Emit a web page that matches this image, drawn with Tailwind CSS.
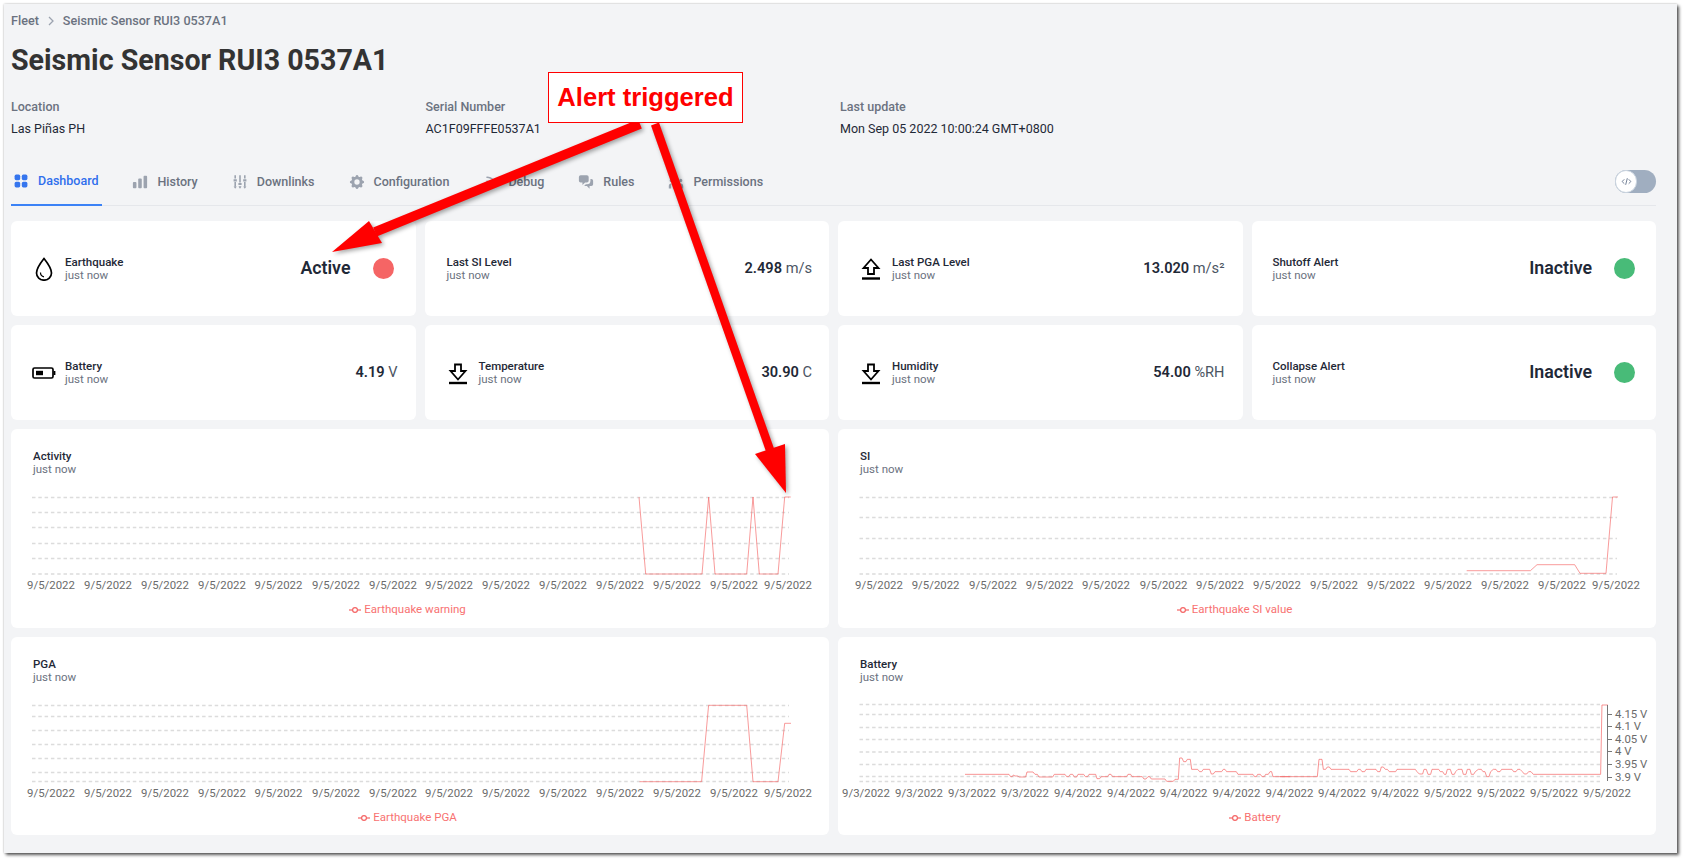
<!DOCTYPE html>
<html lang="en">
<head>
    <meta charset="UTF-8">
    <meta name="viewport" content="width=device-width, initial-scale=1.0">
    <title>Seismic Sensor RUI3 0537A1</title>
    <script src="https://cdn.jsdelivr.net/npm/@tailwindcss/browser@4"></script>
</head>
<body class="relative w-[1687px] h-[862px] overflow-hidden bg-white font-['Roboto',sans-serif]">
    <div class="ml-[4px] mt-[4px] w-[1673px] h-[849px] pl-[7px] bg-[#f3f4f6] shadow-[2px_2px_3px_rgba(0,0,0,0.65),0_0_2px_rgba(0,0,0,0.25)]">
        <div class="w-[1645px]">
            <!-- breadcrumb -->
            <div class="pt-[9px] h-[25px] flex items-center text-[12.6px] font-medium text-[#6b7280]">
                <span>Fleet</span>
                <svg class="w-[16px] h-[16px] mx-[4px] text-[#9ca3af]" viewBox="0 0 20 20" fill="none" stroke="currentColor" stroke-width="1.6"><path d="M7.5 5l5 5-5 5"/></svg>
                <span>Seismic Sensor RUI3 0537A1</span>
            </div>
            <h1 class="mt-[13px] h-[36px] leading-[36px] text-[28.6px] font-bold text-[#333]">Seismic Sensor RUI3 0537A1</h1>

            <!-- device info -->
            <div class="mt-[20px] grid grid-cols-[414.5px_414.5px_1fr] text-[12.5px]">
                <div>
                    <div class="h-[18px] leading-[18px] font-medium text-[#6b7280]">Location</div>
                    <div class="mt-[4px] h-[18px] leading-[18px] text-[#1f2937]">Las Piñas PH</div>
                </div>
                <div>
                    <div class="h-[18px] leading-[18px] font-medium text-[#6b7280]">Serial Number</div>
                    <div class="mt-[4px] h-[18px] leading-[18px] text-[#1f2937]">AC1F09FFFE0537A1</div>
                </div>
                <div>
                    <div class="h-[18px] leading-[18px] font-medium text-[#6b7280]">Last update</div>
                    <div class="mt-[4px] h-[18px] leading-[18px] text-[#1f2937]">Mon Sep 05 2022 10:00:24 GMT+0800</div>
                </div>
            </div>

            <!-- tabs -->
            <div class="mt-[26px] h-[42px] flex justify-between border-b border-[#e5e7eb]">
                <div class="flex gap-[30px] text-[12.5px] font-medium text-[#6b7280]">
                    <div class="h-[42px] pl-[2px] pr-[4px] mr-[-2px] pb-[6px] flex items-center gap-[9px] border-b-2 border-[#3b82f6] text-[#2f6fed]">
                        <svg class="w-[16px] h-[16px]" viewBox="0 0 20 20" fill="#3575ee"><rect x="2" y="2" width="7" height="7" rx="2"/><rect x="11" y="2" width="7" height="7" rx="2"/><rect x="2" y="11" width="7" height="7" rx="2"/><rect x="11" y="11" width="7" height="7" rx="2"/></svg>
                        Dashboard
                    </div>
                    <div class="h-[42px] px-[2px] pb-[6px] flex items-center gap-[9px]">
                        <svg class="w-[16px] h-[16px]" viewBox="1 2 18 16" fill="#9ca3af"><path d="M2 11a1 1 0 011-1h2a1 1 0 011 1v5a1 1 0 01-1 1H3a1 1 0 01-1-1v-5zM8 7a1 1 0 011-1h2a1 1 0 011 1v9a1 1 0 01-1 1H9a1 1 0 01-1-1V7zM14 4a1 1 0 011-1h2a1 1 0 011 1v12a1 1 0 01-1 1h-2a1 1 0 01-1-1V4z"/></svg>
                        History
                    </div>
                    <div class="h-[42px] px-[2px] pb-[6px] flex items-center gap-[9px]">
                        <svg class="w-[16px] h-[16px]" viewBox="0 0 20 20" fill="none" stroke="#9ca3af" stroke-width="2"><path d="M4 1.500v4M4 10v6M10 1.500v9M10 15v1M16 1.500v4M16 10v6"/><path d="M2 8h4M8 12.500h4M14 8h4" stroke-width="2.600"/><path d="M2 15.500l2 3 2-3zM8 15.500l2 3 2-3zM14 15.500l2 3 2-3z" fill="#9ca3af" stroke="none"/></svg>
                        Downlinks
                    </div>
                    <div class="h-[42px] px-[2px] pb-[6px] flex items-center gap-[9px]">
                        <svg class="w-[16px] h-[16px]" viewBox="1 1 18 18" fill="#9ca3af"><path fill-rule="evenodd" clip-rule="evenodd" d="M11.49 3.17c-.38-1.56-2.6-1.56-2.98 0a1.532 1.532 0 01-2.286.948c-1.372-.836-2.942.734-2.106 2.106.54.886.061 2.042-.947 2.287-1.561.379-1.561 2.6 0 2.978a1.532 1.532 0 01.947 2.287c-.836 1.372.734 2.942 2.106 2.106a1.532 1.532 0 012.287.947c.379 1.561 2.6 1.561 2.978 0a1.533 1.533 0 012.287-.947c1.372.836 2.942-.734 2.106-2.106a1.533 1.533 0 01.947-2.287c1.561-.379 1.561-2.6 0-2.978a1.532 1.532 0 01-.947-2.287c.836-1.372-.734-2.942-2.106-2.106a1.532 1.532 0 01-2.287-.947zM10 13a3 3 0 100-6 3 3 0 000 6z"/></svg>
                        Configuration
                    </div>
                    <div class="h-[42px] px-[2px] pb-[6px] flex items-center gap-[9px]">
                        <svg class="w-[16px] h-[16px]" viewBox="0 0 20 20" fill="#9ca3af"><path d="M5 3a1 1 0 000 2c5.523 0 10 4.477 10 10a1 1 0 102 0C17 8.373 11.627 3 5 3z"/><path d="M4 9a1 1 0 011-1 7 7 0 017 7 1 1 0 11-2 0 5 5 0 00-5-5 1 1 0 01-1-1zM3 15a2 2 0 114 0 2 2 0 01-4 0z"/></svg>
                        Debug
                    </div>
                    <div class="h-[42px] px-[2px] pb-[6px] flex items-center gap-[9px]">
                        <svg class="w-[16px] h-[16px]" viewBox="1 2 18 17" fill="#9ca3af"><path d="M2 5a2 2 0 012-2h7a2 2 0 012 2v4a2 2 0 01-2 2H9l-3 3v-3H4a2 2 0 01-2-2V5z"/><path d="M15 7v2a4 4 0 01-4 4H9.828l-1.766 1.767c.28.149.599.233.938.233h2l3 3v-3h2a2 2 0 002-2V9a2 2 0 00-2-2h-1z"/></svg>
                        Rules
                    </div>
                    <div class="h-[42px] px-[2px] pb-[6px] flex items-center gap-[9px]">
                        <svg class="w-[16px] h-[16px]" viewBox="0 0 20 20" fill="#9ca3af"><path d="M13 6a3 3 0 11-6 0 3 3 0 016 0zM18 8a2 2 0 11-4 0 2 2 0 014 0zM14 15a4 4 0 00-8 0v3h8v-3zM6 8a2 2 0 11-4 0 2 2 0 014 0zM16 18v-3a5.972 5.972 0 00-.75-2.906A3.005 3.005 0 0119 15v3h-3zM4.750 12.094A5.973 5.973 0 004 15v3H1v-3a3 3 0 013.750-2.906z"/></svg>
                        Permissions
                    </div>
                </div>
                <div class="mt-[6px] h-[23px] w-[41px] rounded-full bg-[#a0aec0]">
                    <div class="w-[22px] h-[23px] rounded-full bg-white border border-[#cbd5e0] flex items-center justify-center">
                        <svg class="w-[11px] h-[11px]" viewBox="0 0 20 20" fill="none" stroke="#718096" stroke-width="1.800"><path d="M6 6l-4 4 4 4M14 6l4 4-4 4M11.500 4l-3 12"/></svg>
                    </div>
                </div>
            </div>

            <!-- stat cards -->
            <div class="mt-[15px] grid grid-cols-4 gap-[9px] auto-rows-[95px]">
                <div class="bg-white rounded-md pl-[21px] pr-[22px] flex items-center justify-between">
                    <div class="flex items-center">
                        <svg class="w-[24px] h-[24px] mr-[9px]" viewBox="0 0 24 24" fill="none" stroke="#000" stroke-width="1.700"><path d="M12 1.500C12 1.500 4.500 11 4.500 16a7.500 7.200 0 0015 0C19.500 11 12 1.500 12 1.500z"/><path d="M8.500 15.500c0 2.500 1.500 4 3.500 4.300" stroke-width="1.200"/></svg>
                        <div>
                            <div class="h-[14px] leading-[14px] text-[11.5px] font-medium text-[#1f2937]">Earthquake</div>
                            <div class="h-[13px] leading-[13px] text-[11.5px] text-[#6b7280]">just now</div>
                        </div>
                    </div>
                    <div class="flex items-center gap-[22px]">
                        <span class="text-[17.8px] font-semibold text-[#1f2937]">Active</span>
                        <span class="w-[21px] h-[21px] rounded-full bg-[#f56565]"></span>
                    </div>
                </div>
                <div class="bg-white rounded-md pl-[22px] pr-[17px] flex items-center justify-between">
                    <div>
                        <div class="h-[14px] leading-[14px] text-[11.5px] font-medium text-[#1f2937]">Last SI Level</div>
                        <div class="h-[13px] leading-[13px] text-[11.5px] text-[#6b7280]">just now</div>
                    </div>
                    <div class="text-[14.6px] text-[#4b5563]"><span class="font-semibold text-[#1f2937]">2.498</span> m/s</div>
                </div>
                <div class="bg-white rounded-md pl-[21px] pr-[18px] flex items-center justify-between">
                    <div class="flex items-center">
                        <svg class="w-[24px] h-[24px] mr-[9px]" viewBox="0 0 24 24" fill="none" stroke="#000" stroke-width="1.800"><path d="M12 2.500L4.500 11H9v6h6v-6h4.500z"/><path d="M3 21.500h18" stroke-width="2.400"/></svg>
                        <div>
                            <div class="h-[14px] leading-[14px] text-[11.5px] font-medium text-[#1f2937]">Last PGA Level</div>
                            <div class="h-[13px] leading-[13px] text-[11.5px] text-[#6b7280]">just now</div>
                        </div>
                    </div>
                    <div class="text-[14.6px] text-[#4b5563]"><span class="font-semibold text-[#1f2937]">13.020</span> m/s²</div>
                </div>
                <div class="bg-white rounded-md pl-[21px] pr-[21px] flex items-center justify-between">
                    <div>
                        <div class="h-[14px] leading-[14px] text-[11.5px] font-medium text-[#1f2937]">Shutoff Alert</div>
                        <div class="h-[13px] leading-[13px] text-[11.5px] text-[#6b7280]">just now</div>
                    </div>
                    <div class="flex items-center gap-[22px]">
                        <span class="text-[17.8px] font-semibold text-[#1f2937]">Inactive</span>
                        <span class="w-[21px] h-[21px] rounded-full bg-[#48bb78]"></span>
                    </div>
                </div>

                <div class="bg-white rounded-md pl-[21px] pr-[18px] flex items-center justify-between">
                    <div class="flex items-center">
                        <svg class="w-[24px] h-[24px] mr-[9px]" viewBox="0 0 24 24" fill="none" stroke="#000" stroke-width="1.700"><rect x="1" y="7" width="20" height="10" rx="1.500"/><path d="M22.500 10v4" stroke-width="1.800"/><rect x="4" y="9.800" width="7" height="4.400" fill="#000" stroke="none"/></svg>
                        <div>
                            <div class="h-[14px] leading-[14px] text-[11.5px] font-medium text-[#1f2937]">Battery</div>
                            <div class="h-[13px] leading-[13px] text-[11.5px] text-[#6b7280]">just now</div>
                        </div>
                    </div>
                    <div class="text-[14.6px] text-[#4b5563]"><span class="font-semibold text-[#1f2937]">4.19</span> V</div>
                </div>
                <div class="bg-white rounded-md pl-[21px] pr-[17px] flex items-center justify-between">
                    <div class="flex items-center">
                        <svg class="w-[24px] h-[24px] mr-[9px]" viewBox="0 0 24 24" fill="none" stroke="#000" stroke-width="1.800"><path d="M12 18.500L4.500 10H9V3.500h6V10h4.500z"/><path d="M3 22h18" stroke-width="2.400"/></svg>
                        <div>
                            <div class="h-[14px] leading-[14px] text-[11.5px] font-medium text-[#1f2937]">Temperature</div>
                            <div class="h-[13px] leading-[13px] text-[11.5px] text-[#6b7280]">just now</div>
                        </div>
                    </div>
                    <div class="text-[14.6px] text-[#4b5563]"><span class="font-semibold text-[#1f2937]">30.90</span> C</div>
                </div>
                <div class="bg-white rounded-md pl-[21px] pr-[18px] flex items-center justify-between">
                    <div class="flex items-center">
                        <svg class="w-[24px] h-[24px] mr-[9px]" viewBox="0 0 24 24" fill="none" stroke="#000" stroke-width="1.800"><path d="M12 18.500L4.500 10H9V3.500h6V10h4.500z"/><path d="M3 22h18" stroke-width="2.400"/></svg>
                        <div>
                            <div class="h-[14px] leading-[14px] text-[11.5px] font-medium text-[#1f2937]">Humidity</div>
                            <div class="h-[13px] leading-[13px] text-[11.5px] text-[#6b7280]">just now</div>
                        </div>
                    </div>
                    <div class="text-[14.6px] text-[#4b5563]"><span class="font-semibold text-[#1f2937]">54.00</span> %RH</div>
                </div>
                <div class="bg-white rounded-md pl-[21px] pr-[21px] flex items-center justify-between">
                    <div>
                        <div class="h-[14px] leading-[14px] text-[11.5px] font-medium text-[#1f2937]">Collapse Alert</div>
                        <div class="h-[13px] leading-[13px] text-[11.5px] text-[#6b7280]">just now</div>
                    </div>
                    <div class="flex items-center gap-[22px]">
                        <span class="text-[17.8px] font-semibold text-[#1f2937]">Inactive</span>
                        <span class="w-[21px] h-[21px] rounded-full bg-[#48bb78]"></span>
                    </div>
                </div>
            </div>

            <!-- charts -->
            <div class="mt-[9px] grid grid-cols-2 gap-[9px] grid-rows-[199px_198px]">
                <div class="bg-white rounded-md pt-[20px]">
                    <div class="px-[22px]">
                        <div class="h-[14px] leading-[14px] text-[11.5px] font-medium text-[#1f2937]">Activity</div>
                        <div class="h-[13px] leading-[13px] text-[11.5px] text-[#6b7280]">just now</div>
                    </div>
                    <svg class="mt-[4px] w-[818px] h-[120px] text-[11.4px]" viewBox="11 480 818 120" fill="#6b6b6b">
                        <g stroke="#dcdcdc" stroke-width="1.300" stroke-dasharray="3.500 2.800" fill="none">
                            <path d="M32 497.500H789M32 512.500H789M32 527.500H789M32 543.500H789M32 558.500H789M32 574H789"/>
                        </g>
                        <polyline fill="none" stroke="#f56565" stroke-opacity="0.65" points="639,497 645.700,574 702,574 708.700,497 715,574 746.700,574 753,497 759.300,574 778,574 784.700,497 790.700,497"/>
                        <g text-anchor="middle">
                            <text x="51" y="589">9/5/2022</text><text x="108" y="589">9/5/2022</text><text x="165" y="589">9/5/2022</text><text x="222" y="589">9/5/2022</text><text x="278.500" y="589">9/5/2022</text><text x="336" y="589">9/5/2022</text><text x="393" y="589">9/5/2022</text><text x="449" y="589">9/5/2022</text><text x="506" y="589">9/5/2022</text><text x="563" y="589">9/5/2022</text><text x="620" y="589">9/5/2022</text><text x="677" y="589">9/5/2022</text><text x="734" y="589">9/5/2022</text><text x="788" y="589">9/5/2022</text>
                        </g>
                    </svg>
                    <div class="mt-[3px] pr-[25px] h-[14px] flex items-center justify-center gap-[3px] text-[11.5px] text-[#f87171]">
                        <svg class="w-[12px] h-[8px]" viewBox="0 0 12 8" fill="#fff" stroke="#f56565" stroke-width="1.200"><path d="M0 4h12"/><circle cx="6" cy="4" r="2.400"/></svg>
                        Earthquake warning
                    </div>
                </div>
                <div class="bg-white rounded-md pt-[20px]">
                    <div class="px-[22px]">
                        <div class="h-[14px] leading-[14px] text-[11.5px] font-medium text-[#1f2937]">SI</div>
                        <div class="h-[13px] leading-[13px] text-[11.5px] text-[#6b7280]">just now</div>
                    </div>
                    <svg class="mt-[4px] w-[818px] h-[120px] text-[11.4px]" viewBox="838 480 818 120" fill="#6b6b6b">
                        <g stroke="#dcdcdc" stroke-width="1.300" stroke-dasharray="3.500 2.800" fill="none">
                            <path d="M859.500 497.500H1617M859.500 517.500H1617M859.500 538.500H1617M859.500 558.500H1617M859.500 574H1617"/>
                        </g>
                        <polyline fill="none" stroke="#f56565" stroke-opacity="0.65" points="1466.700,570.700 1530.400,570.700 1537,564.700 1574.700,564.700 1580,573.300 1606,573.300 1612.500,497 1618,497"/>
                        <g text-anchor="middle">
                            <text x="879" y="589">9/5/2022</text><text x="935.600" y="589">9/5/2022</text><text x="993" y="589">9/5/2022</text><text x="1049.600" y="589">9/5/2022</text><text x="1106" y="589">9/5/2022</text><text x="1163.600" y="589">9/5/2022</text><text x="1220" y="589">9/5/2022</text><text x="1277" y="589">9/5/2022</text><text x="1334" y="589">9/5/2022</text><text x="1391" y="589">9/5/2022</text><text x="1448" y="589">9/5/2022</text><text x="1505" y="589">9/5/2022</text><text x="1562" y="589">9/5/2022</text><text x="1616" y="589">9/5/2022</text>
                        </g>
                    </svg>
                    <div class="mt-[3px] pr-[25px] h-[14px] flex items-center justify-center gap-[3px] text-[11.5px] text-[#f87171]">
                        <svg class="w-[12px] h-[8px]" viewBox="0 0 12 8" fill="#fff" stroke="#f56565" stroke-width="1.200"><path d="M0 4h12"/><circle cx="6" cy="4" r="2.400"/></svg>
                        Earthquake SI value
                    </div>
                </div>
                <div class="bg-white rounded-md pt-[20px]">
                    <div class="px-[22px]">
                        <div class="h-[14px] leading-[14px] text-[11.5px] font-medium text-[#1f2937]">PGA</div>
                        <div class="h-[13px] leading-[13px] text-[11.5px] text-[#6b7280]">just now</div>
                    </div>
                    <svg class="mt-[4px] w-[818px] h-[120px] text-[11.4px]" viewBox="11 688 818 120" fill="#6b6b6b">
                        <g stroke="#dcdcdc" stroke-width="1.300" stroke-dasharray="3.500 2.800" fill="none">
                            <path d="M32 705.500H789M32 716.500H789M32 730.500H789M32 744.500H789M32 758.500H789M32 772.500H789M32 781.500H789"/>
                        </g>
                        <polyline fill="none" stroke="#f56565" stroke-opacity="0.65" points="639.500,781.700 701.600,781.700 708.600,705.300 746.700,705.300 753,781.700 778,781.700 784.700,723.300 791,723.300"/>
                        <g text-anchor="middle">
                            <text x="51" y="797">9/5/2022</text><text x="108" y="797">9/5/2022</text><text x="165" y="797">9/5/2022</text><text x="222" y="797">9/5/2022</text><text x="278.500" y="797">9/5/2022</text><text x="336" y="797">9/5/2022</text><text x="393" y="797">9/5/2022</text><text x="449" y="797">9/5/2022</text><text x="506" y="797">9/5/2022</text><text x="563" y="797">9/5/2022</text><text x="620" y="797">9/5/2022</text><text x="677" y="797">9/5/2022</text><text x="734" y="797">9/5/2022</text><text x="788" y="797">9/5/2022</text>
                        </g>
                    </svg>
                    <div class="mt-[3px] pr-[25px] h-[14px] flex items-center justify-center gap-[3px] text-[11.5px] text-[#f87171]">
                        <svg class="w-[12px] h-[8px]" viewBox="0 0 12 8" fill="#fff" stroke="#f56565" stroke-width="1.200"><path d="M0 4h12"/><circle cx="6" cy="4" r="2.400"/></svg>
                        Earthquake PGA
                    </div>
                </div>
                <div class="bg-white rounded-md pt-[20px]">
                    <div class="px-[22px]">
                        <div class="h-[14px] leading-[14px] text-[11.5px] font-medium text-[#1f2937]">Battery</div>
                        <div class="h-[13px] leading-[13px] text-[11.5px] text-[#6b7280]">just now</div>
                    </div>
                    <svg class="mt-[4px] w-[818px] h-[120px] text-[11.4px]" viewBox="838 688 818 120" fill="#6b6b6b">
                        <g stroke="#dcdcdc" stroke-width="1.300" stroke-dasharray="3.500 2.800" fill="none">
                            <path d="M859.500 704.500H1600M859.500 714.500H1600M859.500 727.500H1600M859.500 739.500H1600M859.500 752H1600M859.500 764.500H1600M859.500 776.500H1600M859.500 781.500H1600"/>
                        </g>
                        <g fill="none" stroke="#f56565" stroke-opacity="0.7" stroke-width="3">
                            <polyline transform="translate(960 725) scale(0.3333)" points="15,148 147,148 152,155 157,155 160,150 165,153 172,153 178,156 197,156 201,141 219,141 225,148 232,148 237,156 278,156 283,148 315,148 320,155 326,155 331,148 338,148 343,156 350,156 354,148 371,148 376,155 383,155 387,148 407,148 411,161 419,161 424,155 443,155 447,148 453,148 458,155 500,155 504,148 512,148 516,155 547,155 552,162 558,162 564,155 569,155 574,162 615,162 620,169 640,169 645,163 655,163 659,99 666,99 671,110 678,110 682,103 691,103 695,133 713,133 719,140 725,140 730,133 749,133 754,147 760,147 765,140 785,140 790,133 795,133 800,140 829,140 834,148 879,148 884,155 889,155 893,148 901,148 906,155 913,155 917,148 925,148 930,140 935,140 939,155 990,155"/>
                            <polyline transform="translate(1280 725) scale(0.3333)" points="0,155 112,155 117,103 126,103 130,133 137,133 142,126 148,126 153,133 207,133 212,140 230,140 235,133 241,133 246,140 254,140 258,133 288,133 293,140 300,140 304,126 310,126 316,133 322,133 328,140 347,140 351,133 406,133 411,140 418,147 428,147 432,133 439,133 444,148 452,148 456,133 476,133 481,140 488,140 493,148 498,148 502,133 511,133 516,148 523,148 527,140 534,133 546,133 550,148 558,148 562,133 570,133 574,148 581,148 586,140 595,133 604,133 609,140 615,140 620,155 627,155 632,140 640,133 648,133 653,140 660,140 665,133 696,133 701,140 708,140 713,133 720,133 727,140 733,147 740,147 746,140 753,140 760,148 962,148 966,-60 984,-60"/>
                        </g>
                        <path d="M1607.500 705V781M1607.500 714.500H1612M1607.500 726.500H1612M1607.500 739.500H1612M1607.500 751.500H1612M1607.500 764.500H1612M1607.500 777.500H1612" fill="none" stroke="#777"/>
                        <g>
                            <text x="1615" y="718">4.15 V</text><text x="1615" y="730">4.1 V</text><text x="1615" y="743">4.05 V</text><text x="1615" y="755">4 V</text><text x="1615" y="768">3.95 V</text><text x="1615" y="781">3.9 V</text>
                        </g>
                        <g text-anchor="middle">
                            <text x="866" y="797">9/3/2022</text><text x="919" y="797">9/3/2022</text><text x="972" y="797">9/3/2022</text><text x="1025" y="797">9/3/2022</text><text x="1078" y="797">9/4/2022</text><text x="1131" y="797">9/4/2022</text><text x="1183.600" y="797">9/4/2022</text><text x="1236.500" y="797">9/4/2022</text><text x="1289.500" y="797">9/4/2022</text><text x="1342" y="797">9/4/2022</text><text x="1395" y="797">9/4/2022</text><text x="1448" y="797">9/5/2022</text><text x="1501" y="797">9/5/2022</text><text x="1554" y="797">9/5/2022</text><text x="1607" y="797">9/5/2022</text>
                        </g>
                    </svg>
                    <div class="mt-[3px] pl-[16px] h-[14px] flex items-center justify-center gap-[3px] text-[11.5px] text-[#f87171]">
                        <svg class="w-[12px] h-[8px]" viewBox="0 0 12 8" fill="#fff" stroke="#f56565" stroke-width="1.200"><path d="M0 4h12"/><circle cx="6" cy="4" r="2.400"/></svg>
                        Battery
                    </div>
                </div>
            </div>
        </div>
    </div>

    <!-- callout drawn over the screenshot -->
    <svg class="absolute left-0 top-0 w-[1687px] h-[862px] pointer-events-none drop-shadow-[2px_2px_2px_rgba(0,0,0,0.35)]" viewBox="0 0 1687 862" fill="#ff0000" stroke="none">
        <path d="M640 124L375 232" stroke="#ff0000" stroke-width="9.500"/>
        <polygon points="332,252 369,221 382,243"/>
        <path d="M655 124L770 450" stroke="#ff0000" stroke-width="8.500"/>
        <polygon points="786,493 755,454 785,444"/>
    </svg>
    <div class="absolute left-[548px] top-[72px] w-[195px] h-[51px] bg-white border border-[#ff0000] flex items-center justify-center font-['Liberation_Sans',sans-serif] font-bold text-[25.6px] text-[#ff0000]">Alert triggered</div>
</body>
</html>
